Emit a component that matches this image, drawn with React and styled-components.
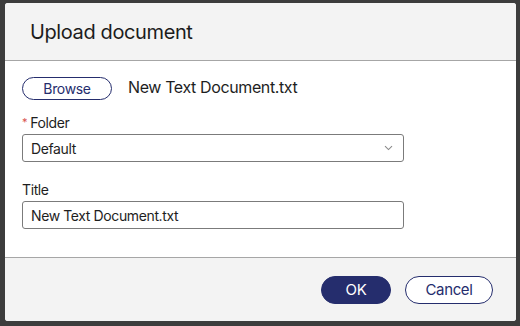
import styled, { createGlobalStyle } from "styled-components";

const GlobalStyle = createGlobalStyle`
  html, body {
    margin: 0;
    padding: 0;
    background-color: #3c3c3c;
    font-family: "Inter", "Liberation Sans", sans-serif;
    letter-spacing: -0.024em;
  }
`;

const Dialog = styled.div`
  margin: 3px 4px 5px 5px;
  width: 511px;
  height: 318px;
  background-color: #ffffff;
  border-radius: 3px;
  overflow: hidden;
  display: flex;
  flex-direction: column;
`;

const Header = styled.div`
  height: 57px;
  background-color: #f3f3f3;
  border-bottom: 1px solid #a6a6a6;
  display: flex;
  align-items: center;
  padding-left: 25px;
`;

const Title = styled.h1`
  margin: 0;
  font-size: 20px;
  font-weight: 400;
  color: #1c1c1c;
`;

const Body = styled.div`
  flex: 1;
  padding: 16px 17px 0 17px;
  display: flex;
  flex-direction: column;
`;

const FileRow = styled.div`
  display: flex;
  align-items: center;
  gap: 16px;
`;

const FileName = styled.span`
  font-size: 16px;
  color: #1e1e1e;
  padding-bottom: 3px;
`;

const PillButton = styled.button`
  all: unset;
  box-sizing: border-box;
  width: ${(p) => p.width}px;
  height: ${(p) => p.height}px;
  display: flex;
  justify-content: center;
  align-items: center;
  border-radius: 999px;
  border: 1px solid #252d6d;
  background-color: ${(p) => (p.primary ? "#252d6d" : "#ffffff")};
  color: ${(p) => (p.primary ? "#ffffff" : "#252d6d")};
  font-family: "Inter", "Liberation Sans", sans-serif;
  letter-spacing: -0.024em;
  font-size: ${(p) => p.size}px;
  cursor: pointer;
`;

const Field = styled.div`
  margin-top: ${(p) => p.top}px;
  display: flex;
  flex-direction: column;
  gap: 2px;
  width: 382px;
`;

const Label = styled.label`
  font-size: 14px;
  line-height: 18px;
  color: #1e1e1e;
`;

const Required = styled.span`
  color: #d9534f;
  font-size: 11px;
  margin-right: 3px;
  vertical-align: 2px;
`;

const Box = styled.div`
  box-sizing: border-box;
  height: 28px;
  border: 1px solid #7b7b7b;
  border-radius: 3px;
  display: flex;
  align-items: center;
  justify-content: space-between;
  padding: 0 10px 0 8px;
  font-size: 14px;
  color: #1e1e1e;
`;

const Footer = styled.div`
  height: 63px;
  background-color: #f3f3f3;
  border-top: 1px solid #a6a6a6;
  display: flex;
  align-items: center;
  justify-content: flex-end;
  gap: 14px;
  padding-right: 23px;
`;

const Chevron = () => (
  <svg width="9" height="6" viewBox="0 0 9 6">
    <path d="M1 1.2 L4.5 4.6 L8 1.2" fill="none" stroke="#8a8a8a" strokeWidth="1.1" />
  </svg>
);

export default function App() {
  return (
    <>
      <GlobalStyle />
      <Dialog>
        <Header>
          <Title>Upload document</Title>
        </Header>
        <Body>
          <FileRow>
            <PillButton width={90} height={23} size={14}>
              Browse
            </PillButton>
            <FileName>New Text Document.txt</FileName>
          </FileRow>
          <Field top={13}>
            <Label>
              <Required>*</Required>Folder
            </Label>
            <Box>
              <span>Default</span>
              <Chevron />
            </Box>
          </Field>
          <Field top={19}>
            <Label>Title</Label>
            <Box>New Text Document.txt</Box>
          </Field>
        </Body>
        <Footer>
          <PillButton primary width={70} height={28} size={15}>
            OK
          </PillButton>
          <PillButton width={88} height={28} size={15}>
            Cancel
          </PillButton>
        </Footer>
      </Dialog>
    </>
  );
}
